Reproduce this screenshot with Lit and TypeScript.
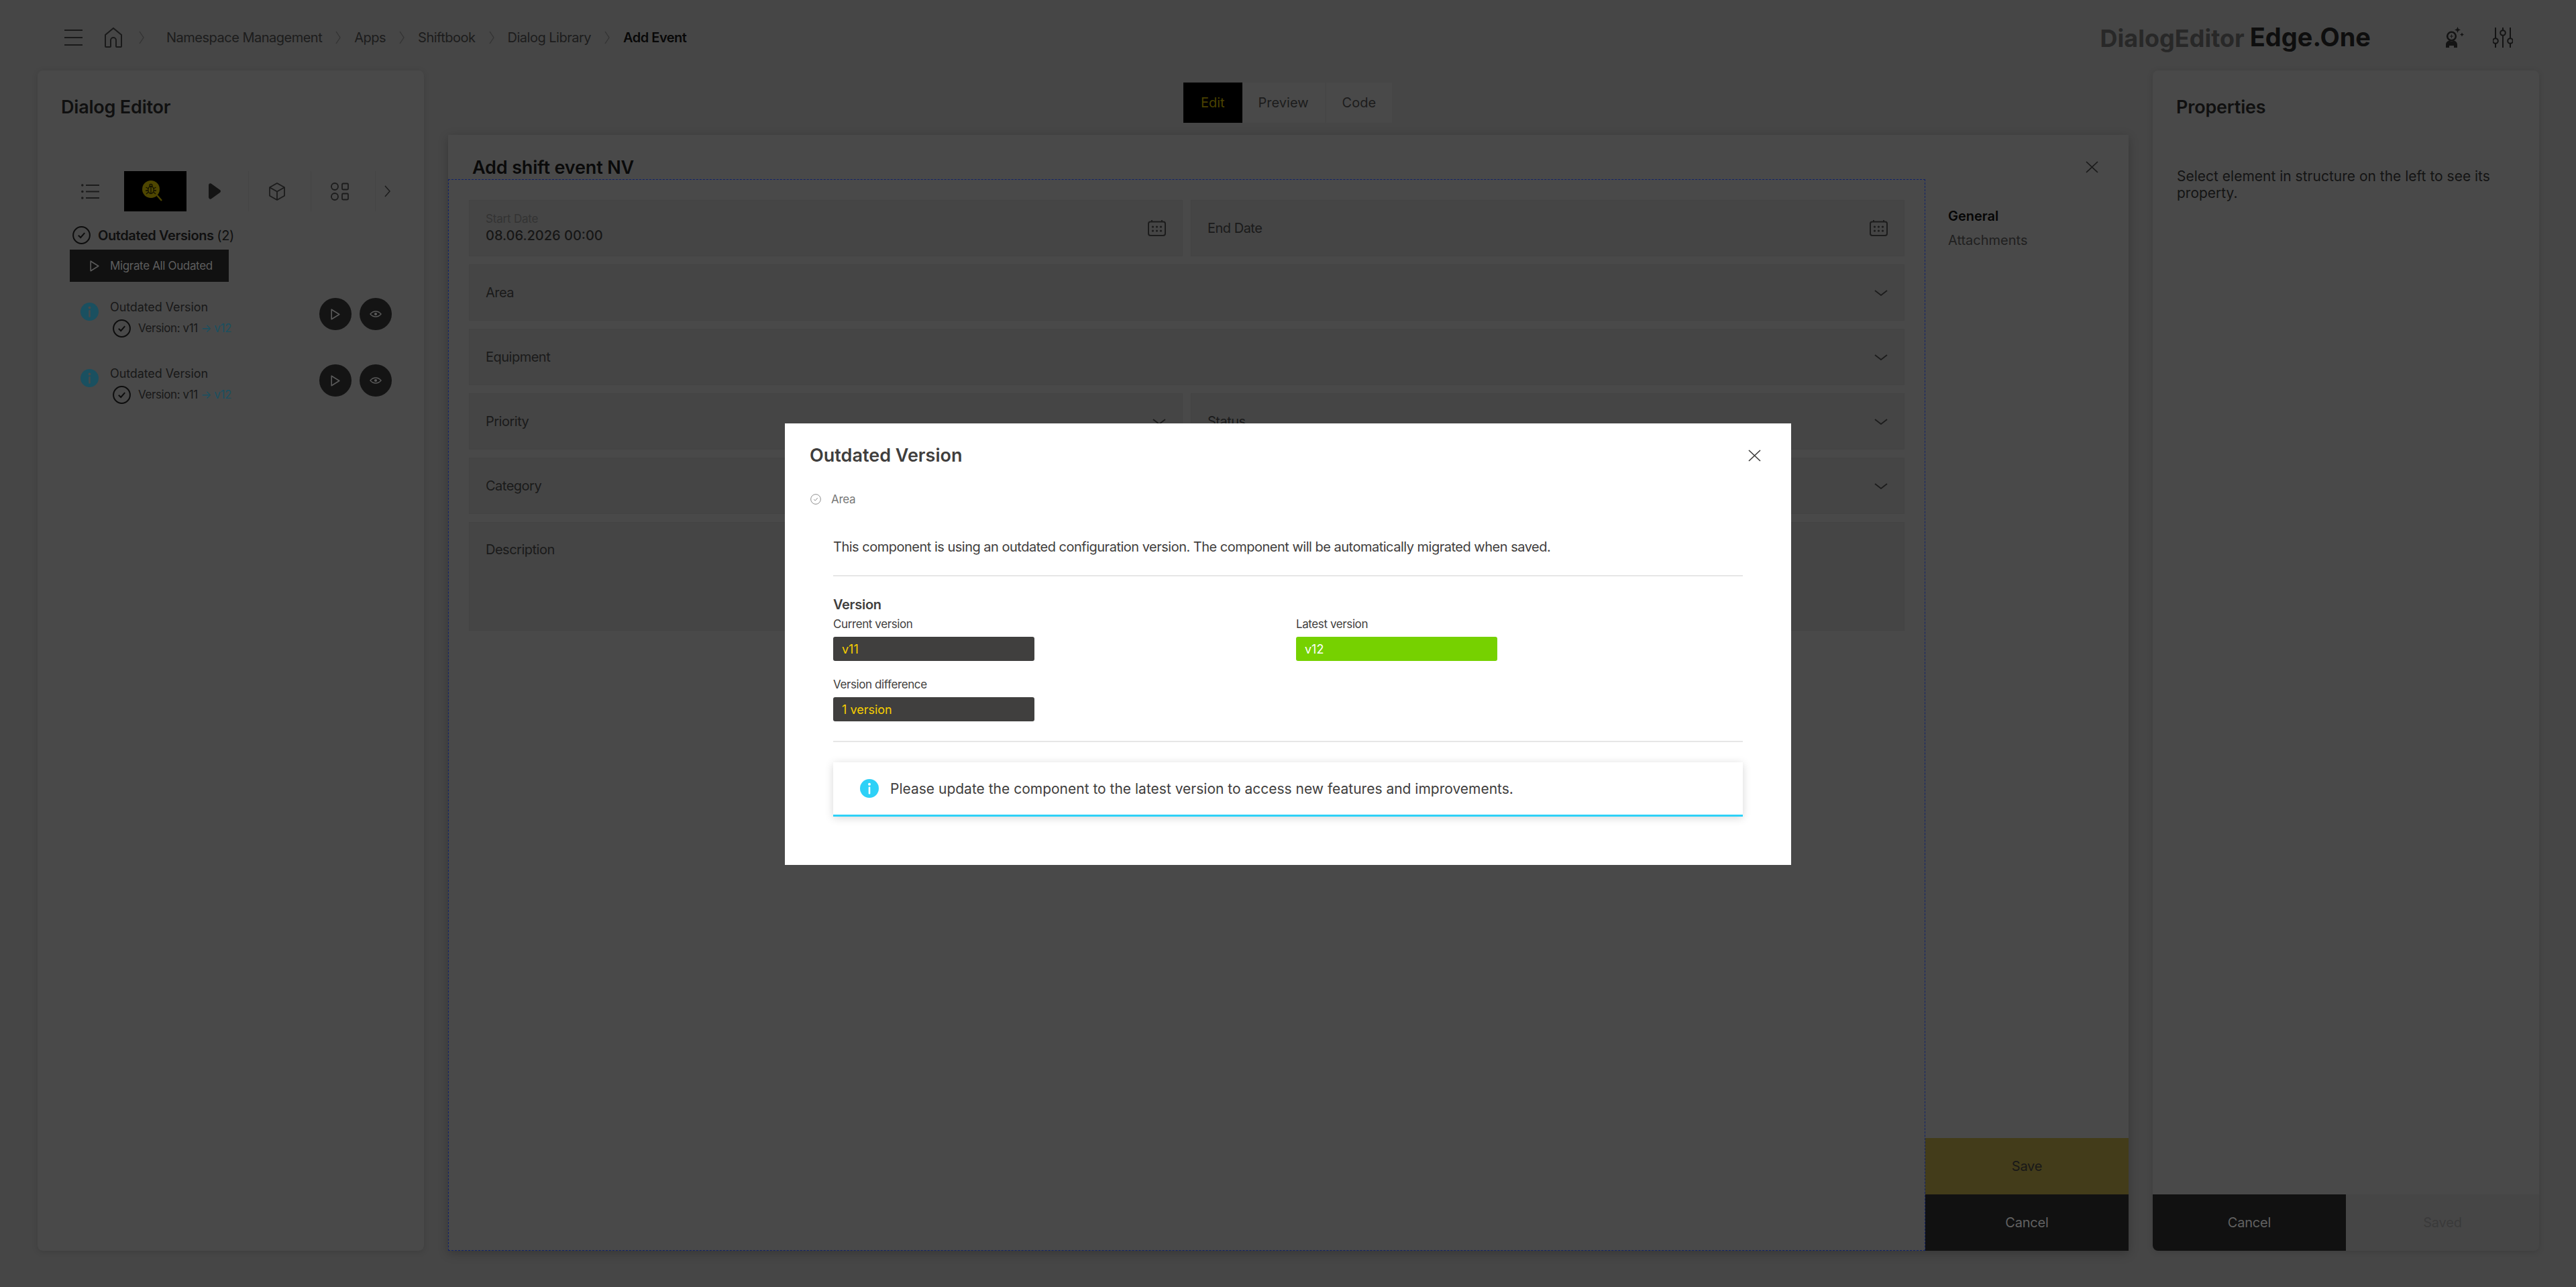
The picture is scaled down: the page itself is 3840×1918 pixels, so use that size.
import { LitElement, html, css } from "lit";
import { customElement } from "lit/decorators.js";

const chev = html`<svg class="crumb-chev" width="8" height="20" viewBox="0 0 8 20"><path d="M1 1l6 9-6 9" fill="none" stroke="#333" stroke-width="1.3"/></svg>`;

const check = (size: number, color = "#0d0d0d", sw = 2) => html`<svg width=${size} height=${size} viewBox="0 0 27 27" fill="none"><circle cx="13.5" cy="13.5" r="12.4" stroke=${color} stroke-width=${sw}/><path d="M8.8 13.8l3.4 3.2 6-6.8" stroke=${color} stroke-width=${sw}/></svg>`;

const info = (size: number, color: string, mark: string) => html`<svg width=${size} height=${size} viewBox="0 0 28 28"><circle cx="14" cy="14" r="14" fill=${color}/><circle cx="14" cy="7.8" r="2" fill=${mark}/><rect x="12.7" y="11.5" width="2.6" height="11" rx="1" fill=${mark}/></svg>`;

const calendar = html`<svg width="27" height="24" viewBox="0 0 27 24" fill="none" stroke="#1c1c1c" stroke-width="2"><rect x="1" y="2.5" width="25" height="20.5" rx="3"/><path d="M6 0v3M21 0v3"/><g fill="#1c1c1c" stroke="none"><circle cx="7.5" cy="10" r="1.6"/><circle cx="13.5" cy="10" r="1.6"/><circle cx="19.5" cy="10" r="1.6"/><circle cx="7.5" cy="16" r="1.6"/><circle cx="13.5" cy="16" r="1.6"/><circle cx="19.5" cy="16" r="1.6"/></g></svg>`;

const chevDown = html`<svg width="20" height="9" viewBox="0 0 20 9"><path d="M1 1l9 7 9-7" fill="none" stroke="#1c1c1c" stroke-width="1.8"/></svg>`;

const close = (c: string) => html`<svg width="19" height="18" viewBox="0 0 19 18"><path d="M1 1l17 16M18 1L1 17" fill="none" stroke=${c} stroke-width="1.7"/></svg>`;

const playOutline = (c: string) => html`<svg width="14" height="17" viewBox="0 0 14 17"><path d="M1.2 1.2v14.6L12.8 8.5z" fill="none" stroke=${c} stroke-width="1.6" stroke-linejoin="round"/></svg>`;

const eye = html`<svg width="18" height="10" viewBox="0 0 18 10" fill="none" stroke="#5a5a5a" stroke-width="1.4"><path d="M1 5c2.200-2.700 4.800-4 8-4s5.800 1.300 8 4c-2.200 2.700-4.800 4-8 4S3.200 7.700 1 5z"/><circle cx="9" cy="5" r="2.100" fill="#5a5a5a" stroke="none"/></svg>`;

const toolIcons = [
  html`<svg width="27" height="23" viewBox="0 0 27 23" fill="none" stroke="#1c1c1c" stroke-width="2"><path d="M7 2h20M7 11.500h20M7 21h20"/><g fill="#1c1c1c" stroke="none"><circle cx="1.800" cy="2" r="1.800"/><circle cx="1.800" cy="11.500" r="1.800"/><circle cx="1.800" cy="21" r="1.800"/></g></svg>`,
  html`<svg width="30" height="32" viewBox="0 0 30 32" fill="none"><circle cx="13" cy="13" r="13" fill="#4e4600"/><path d="M22 22l7 8" stroke="#4e4600" stroke-width="2.400"/><g stroke="#121100" stroke-width="1.300"><ellipse cx="13" cy="14" rx="4.200" ry="5.500"/><circle cx="13" cy="7.500" r="2"/><path d="M5.500 10l3.500 2M20.500 10L17 12M5 15h4M21 15h-4M6 20l3-2.500M20 20l-3-2.500M13 9v10"/></g></svg>`,
  html`<svg width="18" height="24" viewBox="0 0 18 24"><path d="M0 3.500C0 .8 2.300-.5 4.300 1L16.500 9.700c2 1.400 2 3.200 0 4.600L4.300 23C2.300 24.500 0 23.200 0 20.500z" fill="#141414"/></svg>`,
  html`<svg width="24" height="27" viewBox="0 0 24 27" fill="none" stroke="#1c1c1c" stroke-width="1.800" stroke-linejoin="round"><path d="M12 1l11 6.200v12.600L12 26 1 19.800V7.200z"/><path d="M1 7.200l11 6.300 11-6.300M12 13.500V26"/></svg>`,
  html`<svg width="27" height="27" viewBox="0 0 27 27" fill="none" stroke="#1c1c1c" stroke-width="1.800"><circle cx="6" cy="6" r="5"/><rect x="17" y="1.500" width="9" height="9" rx="1.500"/><circle cx="6" cy="21" r="5"/><rect x="17" y="16.500" width="9" height="9" rx="1.500"/></svg>`,
];

const rows = [0, 1];

@customElement("app-root")
export class AppRoot extends LitElement {
  static styles = css`
    :host { display: block; position: relative; width: 100%; height: 1918px; overflow: hidden; background: #464646; font-family: Inter, "Noto Sans", sans-serif; color: #161616; }
    * { box-sizing: border-box; }
    svg { display: block; flex: none; }
    .page { display: flex; flex-direction: column; height: 100%; }

    .topbar { height: 105px; flex: none; padding: 7px 94px 0 96px; display: flex; align-items: center; font-size: 20px; letter-spacing: -0.5px; color: #1c1c1c; }
    .burger { margin-right: 33px; }
    .crumb-home { margin-right: 25px; }
    .crumb-chev { margin-right: 20px; }
    .crumb-chev.first { margin-right: 33px; }
    .crumb { margin-right: 20px; white-space: nowrap; }
    .crumb.cur { font-weight: 600; color: #080808; }
    .logo { margin-left: auto; display: flex; align-items: baseline; gap: 8px; font-weight: 700; white-space: nowrap; letter-spacing: 0; }
    .logo .a { color: #282828; font-size: 36px; }
    .logo .b { color: #0e0e0e; font-size: 38px; position: relative; top: -1px; }
    .tool-a { margin-left: 112px; }
    .tool-b { margin-left: 43px; }

    .main { flex: 1; min-height: 0; display: flex; gap: 36px; padding: 0 55px 54px 56px; }
    .panel { width: 576px; flex: none; display: flex; flex-direction: column; background: #494949; border-radius: 8px; overflow: hidden; box-shadow: 0 2px 10px rgba(0,0,0,.12); }
    .panel-title { font-size: 27px; font-weight: 600; line-height: 32px; padding: 39px 0 0 35px; color: #101010; letter-spacing: -0.2px; }

    .left-body { padding: 79px 48px 0 36px; }
    .tools { display: flex; height: 60px; }
    .tool { width: 93px; flex: none; display: flex; align-items: center; justify-content: center; padding-right: 9px; border-right: 1px solid #444; }
    .tool.plain { border-right: none; }
    .tool.on { background: #000; border-right: none; }
    .tool-more { flex: 1; display: flex; align-items: center; justify-content: flex-end; padding-right: 2px; border-left: 1px solid #444; margin-left: 2px; }
    .sec { display: flex; align-items: center; gap: 11px; margin: 22px 0 0 16px; height: 27px; font-size: 20px; letter-spacing: -0.4px; font-weight: 600; color: #101010; white-space: nowrap; }
    .sec span { font-weight: 400; }
    .migrate { display: flex; align-items: center; gap: 16px; width: 237px; height: 48px; margin: 8px 0 0 12px; padding-left: 30px; background: #111; color: #5e5e5e; font-size: 17px; white-space: nowrap; letter-spacing: -0.35px; }
    .rows { display: flex; flex-direction: column; gap: 41px; margin-top: 24px; }
    .row { display: flex; height: 58px; padding-left: 28px; }
    .row-info { margin-top: 7px; margin-right: 17px; }
    .row-text { flex: 1; font-size: 18px; letter-spacing: -0.1px; }
    .row-name { line-height: 28px; color: #181818; white-space: nowrap; }
    .row-ver { display: flex; align-items: center; gap: 11px; margin: 4px 0 0 4px; height: 26px; font-size: 17px; letter-spacing: -0.4px; color: #181818; white-space: nowrap; }
    .row-ver b { font-weight: 400; color: #1a5060; }
    .round { width: 48px; height: 48px; border-radius: 50%; background: #141414; display: flex; align-items: center; justify-content: center; margin-left: 12px; flex: none; }

    .center { flex: 1; min-width: 0; display: flex; flex-direction: column; align-items: stretch; }
    .tabs { display: flex; justify-content: center; height: 60px; margin: 18px 2px 18px 0; flex: none; font-size: 20px; }
    .tab { display: flex; align-items: center; padding: 0 24px; background: #494949; color: #1c1c1c; margin-right: 2px; }
    .tab:last-child { margin-right: 0; }
    .tab.on { background: #000; color: #4a4200; margin-right: 0; padding: 0 26px; }
    .card { flex: 1; min-height: 0; display: flex; flex-direction: column; background: #494949; box-shadow: 0 4px 14px rgba(0,0,0,.22); }
    .card-head { height: 66px; flex: none; padding: 30px 45px 0 36px; display: flex; align-items: center; justify-content: space-between; }
    .card-title { font-size: 27px; font-weight: 600; color: #0a0a0a; letter-spacing: -0.15px; }
    .card-body { flex: 1; min-height: 0; display: flex; }
    .form { width: 2202px; flex: none; border: 1px dashed #10226a; padding: 30px 30px 0 30px; display: grid; grid-template-columns: 1fr 1fr; gap: 12px; grid-auto-rows: 84px; align-content: start; }
    .field { background: #454545; border: 1px solid #434343; padding: 0 24px; display: flex; align-items: center; justify-content: space-between; font-size: 20px; letter-spacing: -0.5px; color: #1a1a1a; }
    .wide { grid-column: 1 / -1; }
    .field.desc { grid-row: span 2; height: 162px; align-items: flex-start; padding-top: 28px; }
    .date-label { font-size: 17px; color: #333; line-height: 22px; letter-spacing: -0.2px; }
    .date-value { font-size: 20px; font-weight: 500; letter-spacing: 0; color: #161616; line-height: 28px; }
    .side { flex: 1; display: flex; flex-direction: column; min-width: 0; }
    .side-nav { padding: 37px 0 0 34px; font-size: 20px; line-height: 36px; flex: 1; color: #202020; }
    .side-nav b { font-weight: 600; color: #050505; display: block; }
    .btn { height: 84px; flex: none; display: flex; align-items: center; justify-content: center; font-size: 20px; letter-spacing: -0.2px; }
    .btn.save { background: #433c1a; color: #181818; }
    .btn.cancel { background: #111; color: #626262; }
    .btn.saved { background: #464646; color: #3a3a3a; }
    .prop-text { padding: 74px 50px 0 36px; font-size: 21px; line-height: 25px; color: #141414; }
    .foot { margin-top: auto; display: flex; }
    .foot .btn { flex: 1; }

    .scrim { position: absolute; inset: 0; padding-top: 2px; display: flex; align-items: center; justify-content: center; }
    .modal { width: 1500px; height: 658px; background: #fff; color: #3f3e3d; display: flex; flex-direction: column; padding: 30px 72px 0 72px; position: relative; }
    .modal-close { position: absolute; right: 45px; top: 39px; }
    .modal-title { margin-left: -35px; font-size: 27px; font-weight: 600; line-height: 36px; }
    .area { margin: 35px 0 0 -34px; height: 24px; display: flex; align-items: center; gap: 15px; font-size: 17px; letter-spacing: -0.3px; color: #777; }
    .desc-text { margin-top: 44px; line-height: 30px; font-size: 20px; white-space: nowrap; letter-spacing: -0.5px; }
    .rule { height: 2px; background: #e6e6e6; flex: none; }
    .rule.one { margin-top: 27px; }
    .rule.two { margin-top: 29px; }
    .ver-h { margin-top: 28px; font-size: 20px; font-weight: 600; line-height: 28px; letter-spacing: -0.3px; }
    .grid { margin-top: 3px; display: grid; grid-template-columns: 690px 1fr; row-gap: 23px; }
    .k { font-size: 17px; line-height: 24px; letter-spacing: -0.4px; }
    .chip { margin-top: 7px; width: 300px; height: 36px; border-radius: 3px; padding-left: 13px; display: flex; align-items: center; background: #403f3e; color: #f8d000; font-size: 18px; }
    .chip.ok { background: #76d100; color: #fff; }
    .alert { margin-top: 30px; height: 81px; display: flex; align-items: center; gap: 17px; padding-left: 40px; border-bottom: 3px solid #2ed1f7; font-size: 21px; box-shadow: 0 2px 12px rgba(0,0,0,.16); }
  `;

  private row() {
    return html`<div class="row">
      <div class="row-info">${info(27, "#1a5060", "#494949")}</div>
      <div class="row-text">
        <div class="row-name">Outdated Version</div>
        <div class="row-ver">${check(27)}<span>Version: v11 <b>→ v12</b></span></div>
      </div>
      <div class="round">${playOutline("#5a5a5a")}</div>
      <div class="round">${eye}</div>
    </div>`;
  }

  render() {
    return html`
      <div class="page">
        <header class="topbar">
          <svg class="burger" width="27" height="26" viewBox="0 0 27 26"><path d="M0 2h27M0 13h27M0 24h27" stroke="#1a1a1a" stroke-width="2"/></svg>
          <svg class="crumb-home" width="26" height="30" viewBox="0 0 26 30" fill="none" stroke="#1a1a1a" stroke-width="2"><path d="M1 28a1 1 0 0 0 1 1h6a1 1 0 0 0 1-1V19a4 4 0 0 1 8 0v9a1 1 0 0 0 1 1h6a1 1 0 0 0 1-1V11L13 1 1 11z"/></svg>
          <svg class="crumb-chev first" width="8" height="20" viewBox="0 0 8 20"><path d="M1 1l6 9-6 9" fill="none" stroke="#333" stroke-width="1.3"/></svg>
          <span class="crumb">Namespace Management</span>${chev}
          <span class="crumb">Apps</span>${chev}
          <span class="crumb">Shiftbook</span>${chev}
          <span class="crumb">Dialog Library</span>${chev}
          <span class="crumb cur">Add Event</span>
          <div class="logo"><span class="a">DialogEditor</span><span class="b">Edge.One</span></div>
          <svg class="tool-a" width="27" height="32" viewBox="0 0 27 32" fill="#141414">
            <circle cx="8.500" cy="14" r="6.300" fill="none" stroke="#141414" stroke-width="2.600"/>
            <path d="M6 14h5M8.500 11.500v5" stroke="#141414" stroke-width="1"/>
            <path d="M0 31v-4c0-4 2.500-6 5-6.500 2 1.500 5 1.500 7 0 2.500.5 5 2.500 5 6.500v4h-5v-3H5v3z"/>
            <path d="M17.500 0l1.300 3.200 3.200 1.300-3.200 1.300-1.300 3.200-1.300-3.200L13 4.500l3.200-1.300z"/>
            <path d="M24 8.500l.9 2.100 2.100.9-2.100.9-.9 2.100-.9-2.100-2.100-.9 2.100-.9z"/>
          </svg>
          <svg class="tool-b" width="30" height="30" viewBox="0 0 30 30" fill="none" stroke="#141414" stroke-width="2">
            <path d="M4 0v16M4 24v6M15 0v4M15 12v18M26 0v16M26 24v6"/>
            <circle cx="4" cy="20" r="3.800"/><circle cx="15" cy="8" r="3.800"/><circle cx="26" cy="20" r="3.800"/>
          </svg>
        </header>

        <main class="main">
          <aside class="panel">
            <div class="panel-title">Dialog Editor</div>
            <div class="left-body">
              <div class="tools">
                <div class="tool plain">${toolIcons[0]}</div>
                <div class="tool on">${toolIcons[1]}</div>
                <div class="tool">${toolIcons[2]}</div>
                <div class="tool">${toolIcons[3]}</div>
                <div class="tool plain">${toolIcons[4]}</div>
                <div class="tool-more"><svg width="9" height="18" viewBox="0 0 9 18"><path d="M1 1l7 8-7 8" fill="none" stroke="#1c1c1c" stroke-width="1.500"/></svg></div>
              </div>
              <div class="sec">${check(27)}<div>Outdated Versions <span>(2)</span></div></div>
              <div class="migrate">${playOutline("#5a5a5a")}Migrate All Oudated</div>
              <div class="rows">${rows.map(() => this.row())}</div>
            </div>
          </aside>

          <section class="center">
            <div class="tabs">
              <div class="tab on">Edit</div>
              <div class="tab">Preview</div>
              <div class="tab">Code</div>
            </div>
            <div class="card">
              <div class="card-head"><div class="card-title">Add shift event NV</div>${close("#1a1a1a")}</div>
              <div class="card-body">
                <div class="form">
                  <div class="field"><div><div class="date-label">Start Date</div><div class="date-value">08.06.2026 00:00</div></div>${calendar}</div>
                  <div class="field">End Date${calendar}</div>
                  <div class="field wide">Area${chevDown}</div>
                  <div class="field wide">Equipment${chevDown}</div>
                  <div class="field">Priority${chevDown}</div>
                  <div class="field">Status${chevDown}</div>
                  <div class="field wide">Category${chevDown}</div>
                  <div class="field wide desc">Description</div>
                </div>
                <div class="side">
                  <div class="side-nav"><b>General</b>Attachments</div>
                  <div class="btn save">Save</div>
                  <div class="btn cancel">Cancel</div>
                </div>
              </div>
            </div>
          </section>

          <aside class="panel">
            <div class="panel-title">Properties</div>
            <div class="prop-text">Select element in structure on the left to see its property.</div>
            <div class="foot"><div class="btn cancel">Cancel</div><div class="btn saved">Saved</div></div>
          </aside>
        </main>
      </div>

      <div class="scrim">
        <div class="modal" role="dialog">
          <div class="modal-close">${close("#3f3e3d")}</div>
          <div class="modal-title">Outdated Version</div>
          <div class="area">${check(16, "#888", 1.6)}Area</div>
          <div class="desc-text">This component is using an outdated configuration version. The component will be automatically migrated when saved.</div>
          <div class="rule one"></div>
          <div class="ver-h">Version</div>
          <div class="grid">
            <div><div class="k">Current version</div><div class="chip">v11</div></div>
            <div><div class="k">Latest version</div><div class="chip ok">v12</div></div>
            <div><div class="k">Version difference</div><div class="chip">1 version</div></div>
          </div>
          <div class="rule two"></div>
          <div class="alert">${info(28, "#2ed1f7", "#fff")}Please update the component to the latest version to access new features and improvements.</div>
        </div>
      </div>
    `;
  }
}
